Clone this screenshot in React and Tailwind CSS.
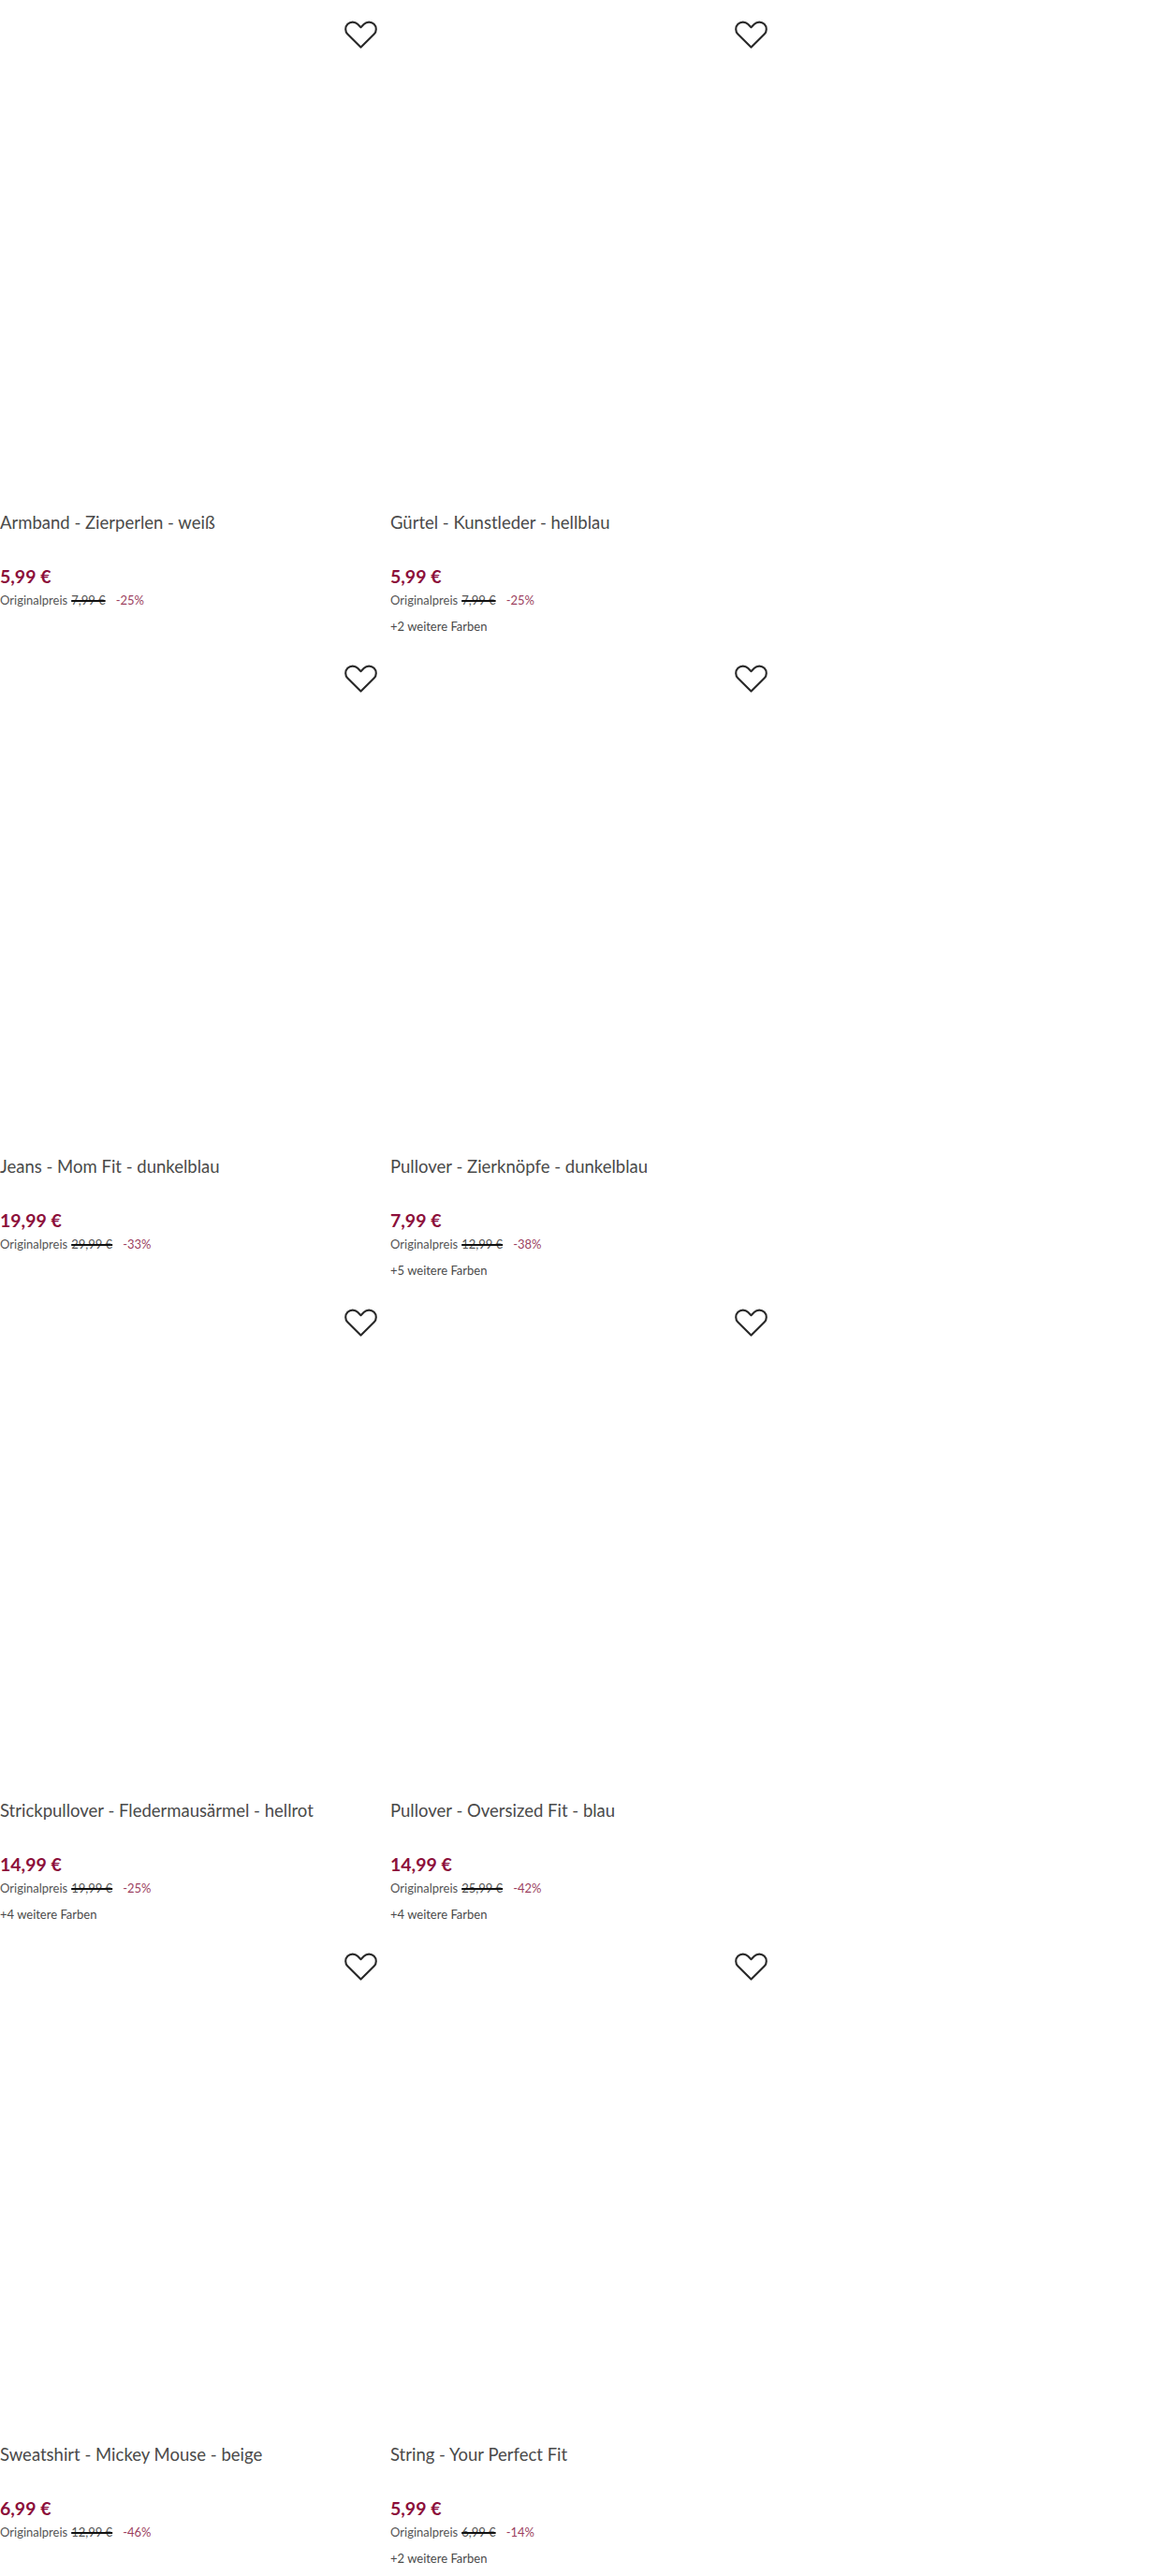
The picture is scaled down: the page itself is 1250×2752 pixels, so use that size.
const PRODUCTS = [
  { name: 'Armband - Zierperlen - weiß', price: '5,99 €', original: '7,99 €', off: '-25%' },
  { name: 'Gürtel - Kunstleder - hellblau', price: '5,99 €', original: '7,99 €', off: '-25%', colors: '+2 weitere Farben' },
  { name: 'Jeans - Mom Fit - dunkelblau', price: '19,99 €', original: '29,99 €', off: '-33%' },
  { name: 'Pullover - Zierknöpfe - dunkelblau', price: '7,99 €', original: '12,99 €', off: '-38%', colors: '+5 weitere Farben' },
  { name: 'Strickpullover - Fledermausärmel - hellrot', price: '14,99 €', original: '19,99 €', off: '-25%', colors: '+4 weitere Farben' },
  { name: 'Pullover - Oversized Fit - blau', price: '14,99 €', original: '25,99 €', off: '-42%', colors: '+4 weitere Farben' },
  { name: 'Sweatshirt - Mickey Mouse - beige', price: '6,99 €', original: '12,99 €', off: '-46%' },
  { name: 'String - Your Perfect Fit', price: '5,99 €', original: '6,99 €', off: '-14%', colors: '+2 weitere Farben' },
]

function Heart() {
  return (
    <svg viewBox="0 0 36 32" className="w-[35px] h-[32px]" fill="none" stroke="#2a2a2a" strokeWidth="2.2" strokeLinejoin="round">
      <path d="M18 30 L3.5 15.5 C0.5 12.5 0.5 7.5 3.5 4.5 C6.5 1.5 11.5 1.5 14.5 4.5 L18 8 L21.5 4.5 C24.5 1.5 29.5 1.5 32.5 4.5 C35.5 7.5 35.5 12.5 32.5 15.5 Z" />
    </svg>
  )
}

function ProductCard({ product }) {
  return (
    <div className="h-[688px] flex flex-col">
      <div className="h-[541px] pt-[21px] pr-[14px] flex justify-end">
        <Heart />
      </div>
      <div className="h-[34px] text-[18.5px] leading-[34px] text-[#4a4a4a] font-normal whitespace-nowrap">{product.name}</div>
      <div className="mt-[29px] h-[24px] text-[19.5px] leading-[24px] font-bold text-[#8c0f3a]">{product.price}</div>
      <div className="mt-[3px] h-[22px] flex items-center text-[13px] font-normal text-[#555555] whitespace-nowrap">
        <span>Originalpreis</span>
        <span className="ml-[4px] line-through decoration-[#111] decoration-[1.5px]">{product.original}</span>
        <span className="ml-[11px] text-[#9c3f5f]">{product.off}</span>
      </div>
      {product.colors && (
        <div className="mt-[5px] text-[13px] leading-[22px] font-normal text-[#4a4a4a]">{product.colors}</div>
      )}
    </div>
  )
}

export default function App() {
  return (
    <div className="w-[1250px] h-[2752px] overflow-hidden bg-white font-['Lato','Liberation_Sans',sans-serif]">
      <div className="w-[834px] grid grid-cols-2">
        {PRODUCTS.map((p) => (
          <ProductCard key={p.name} product={p} />
        ))}
      </div>
    </div>
  )
}
